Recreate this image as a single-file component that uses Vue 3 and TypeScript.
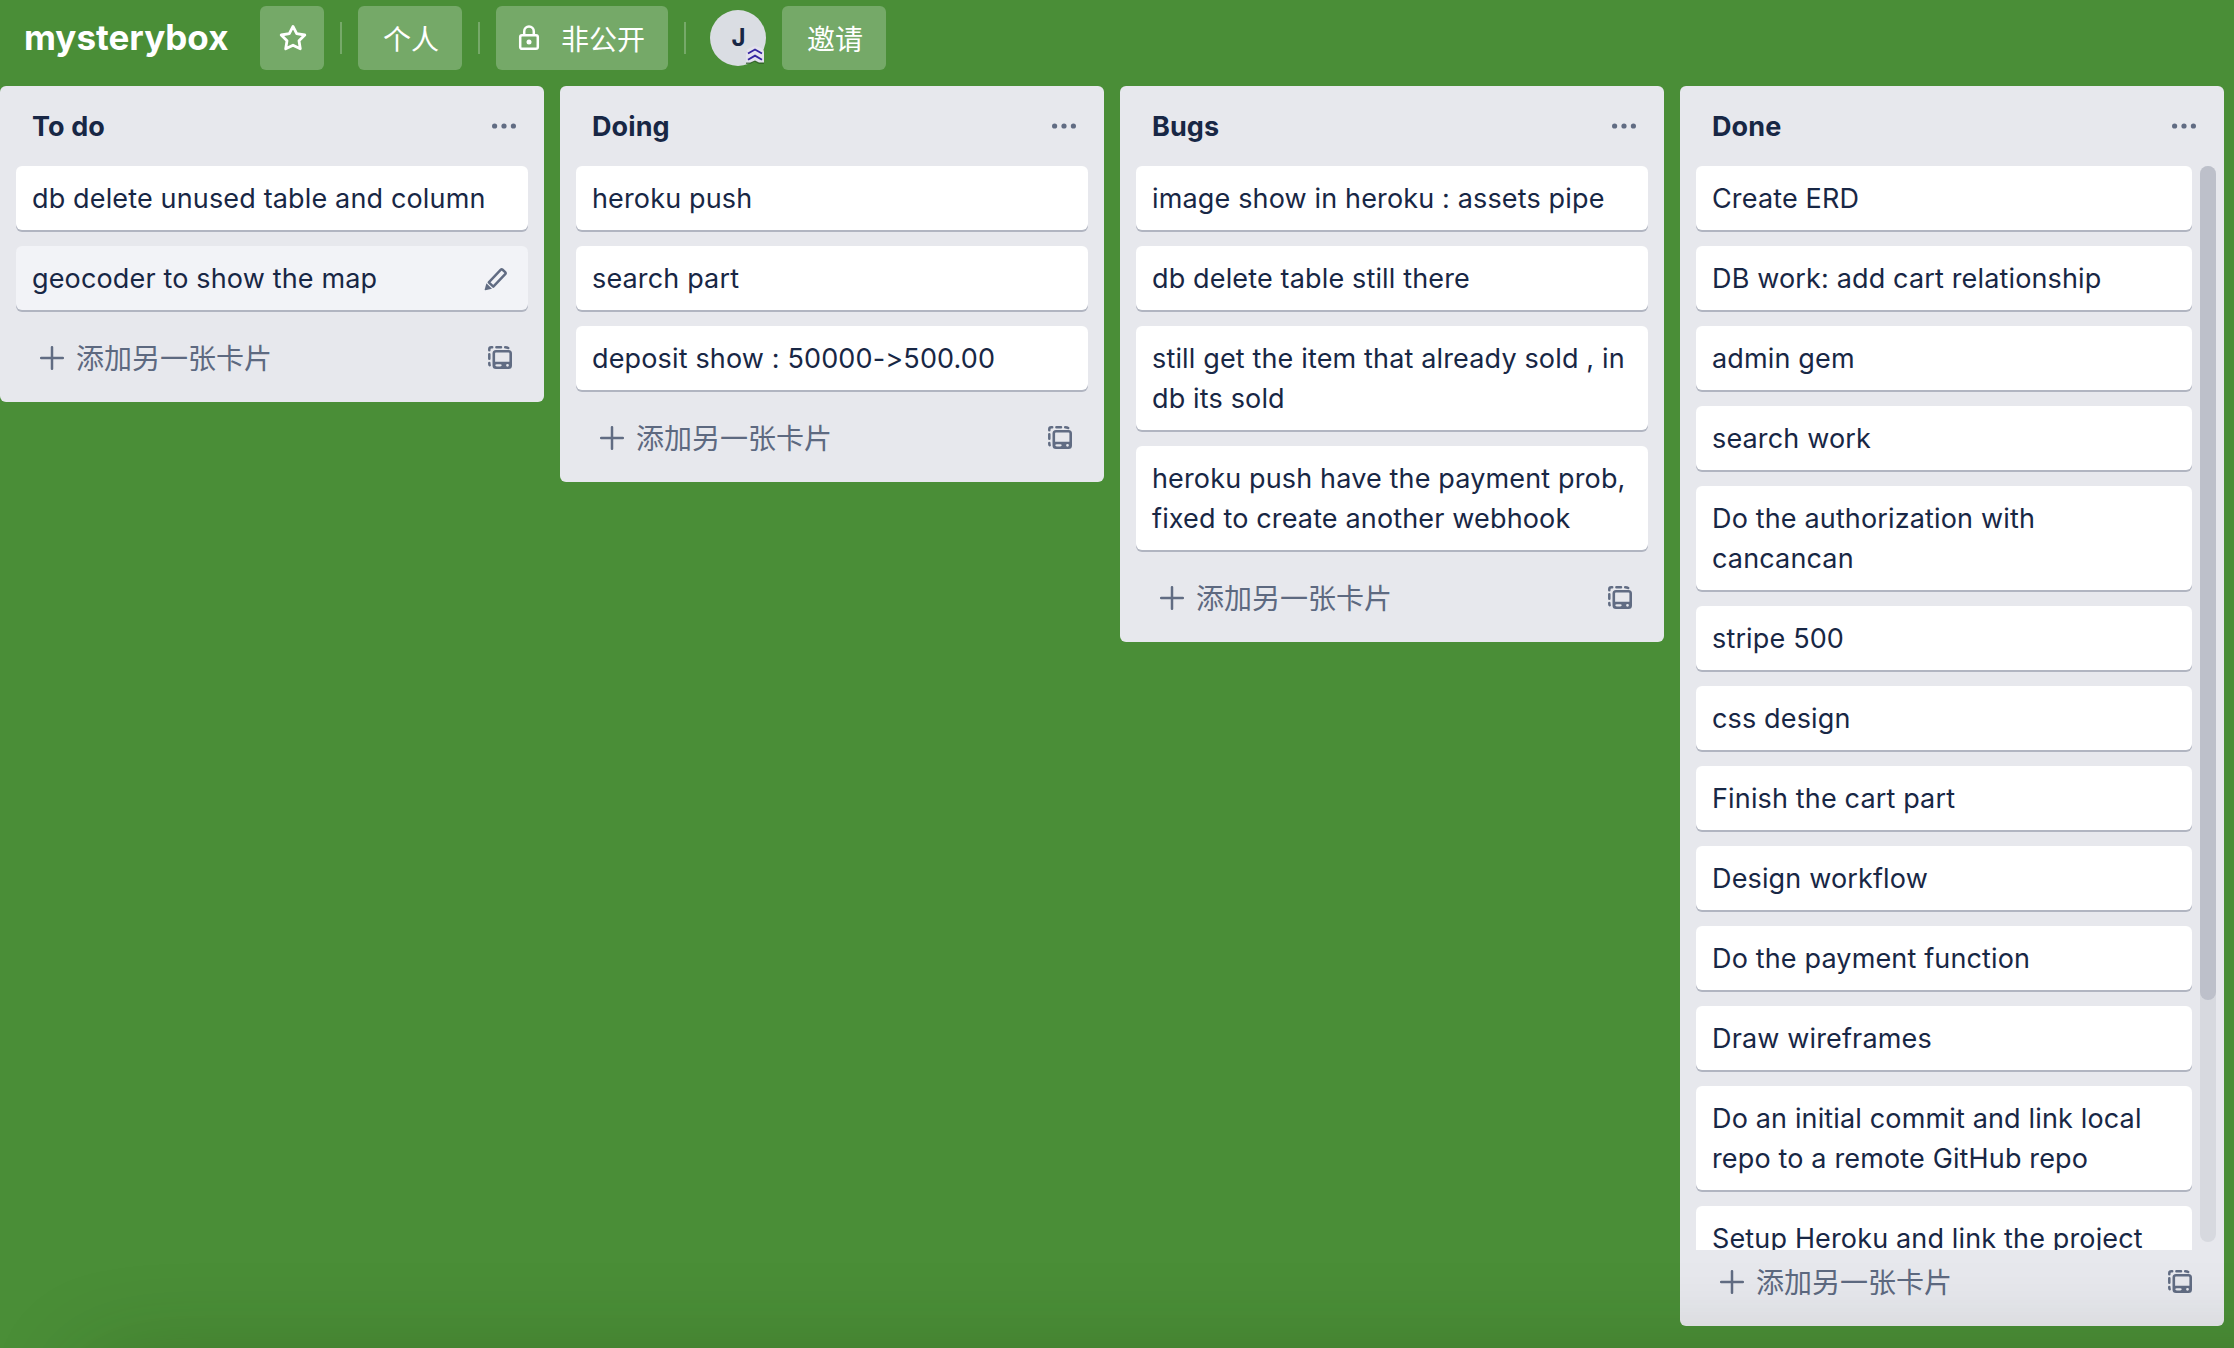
<script setup lang="ts">
interface Card {
  lines: string[]
  hover?: boolean
}
interface List {
  title: string
  cards: Card[]
  scroll?: boolean
}

const c = (...lines: string[]): Card => ({ lines })

const lists: List[] = [
  {
    title: 'To do',
    cards: [
      c('db delete unused table and column'),
      { lines: ['geocoder to show the map'], hover: true },
    ],
  },
  {
    title: 'Doing',
    cards: [c('heroku push'), c('search part'), c('deposit show : 50000->500.00')],
  },
  {
    title: 'Bugs',
    cards: [
      c('image show in heroku : assets pipe'),
      c('db delete table still there'),
      c('still get the item that already sold , in', 'db its sold'),
      c('heroku push have the payment prob,', 'fixed to create another webhook'),
    ],
  },
  {
    title: 'Done',
    scroll: true,
    cards: [
      c('Create ERD'),
      c('DB work: add cart relationship'),
      c('admin gem'),
      c('search work'),
      c('Do the authorization with', 'cancancan'),
      c('stripe 500'),
      c('css design'),
      c('Finish the cart part'),
      c('Design workflow'),
      c('Do the payment function'),
      c('Draw wireframes'),
      c('Do an initial commit and link local', 'repo to a remote GitHub repo'),
      c('Setup Heroku and link the project'),
    ],
  },
]
</script>

<template>
  <div class="page">
    <header class="bar">
      <h1 class="name">mysterybox</h1>
      <button class="btn star" aria-label="star">
        <svg width="32" height="32" viewBox="0 0 32 32" fill="none" stroke="#fff" stroke-width="2.8" stroke-linejoin="round">
          <path d="M17 4.400L20.700 11.700L28.800 13L23 18.800L24.300 26.800L17 23.200L9.700 26.800L11 18.800L5.200 13L13.300 11.700Z" />
        </svg>
      </button>
      <i class="sep" />
      <button class="btn">个人</button>
      <i class="sep" />
      <button class="btn private">
        <svg width="24" height="28" viewBox="0 0 24 28" fill="none" stroke="#fff" stroke-width="2.5">
          <rect x="3.2" y="11.2" width="17.6" height="13.6" rx="1.8" />
          <path d="M7.2 11V7.4a4.8 4.8 0 0 1 9.6 0V11" />
          <circle cx="12" cy="18" r="2.5" fill="#fff" stroke="none" />
        </svg>
        <span>非公开</span>
      </button>
      <i class="sep" />
      <div class="avatar">
        J
        <svg class="badge" width="20" height="20" viewBox="0 0 20 20">
          <path d="M1 8Q1 5 4 3.6L9 0.8L14 3.6Q19 5.500 19 8V18L14 18L9.500 15.800L5 18L1 18Z" fill="#2d5a24" opacity=".75" />
          <path d="M1 7Q1 4 4 2.600L9 0L14 1Q19 3 19 6V16.500L14 16.500L10 14.500L5 16.500L1 16.500Z" fill="#e4e2ee" />
          <g fill="none" stroke="#3425a0" stroke-width="1.900">
            <path d="M3 7.500L10 3.500L17 7.500" />
            <path d="M3 13.800L10 9.700L17 13.800" />
          </g>
        </svg>
      </div>
      <button class="btn">邀请</button>
    </header>

    <main class="board">
      <section v-for="list in lists" :key="list.title" class="list" :class="{ full: list.scroll }">
        <div class="head">
          <h2>{{ list.title }}</h2>
          <svg width="24" height="8" viewBox="0 0 24 8" fill="#616c83">
            <circle cx="2.600" cy="4" r="2.600" />
            <circle cx="12" cy="4" r="2.600" />
            <circle cx="21.400" cy="4" r="2.600" />
          </svg>
        </div>
        <div class="body">
          <div class="cards">
            <article v-for="card in list.cards" :key="card.lines[0]" class="card" :class="{ hover: card.hover }">
              <div>
                <p v-for="line in card.lines" :key="line">{{ line }}</p>
              </div>
              <svg v-if="card.hover" class="pencil" width="24" height="24" viewBox="0 0 24 24">
                <g fill="none" stroke="#616c83" stroke-width="2.500" stroke-linejoin="round">
                  <path d="M4.800 15.300L16.600 2.900Q17.600 1.900 18.600 2.800L21.200 5.200Q22.200 6.200 21.200 7.200L9.300 19.700Z" />
                </g>
                <path d="M2.400 16.200L8 21.700L1.300 23.300Q.5 23.400 .700 22.500Z" fill="#616c83" />
              </svg>
            </article>
          </div>
          <div v-if="list.scroll" class="track"><div class="thumb" /></div>
        </div>
        <footer class="add">
          <svg width="24" height="24" viewBox="0 0 24 24" stroke="#616c83" stroke-width="2.500" stroke-linecap="round">
            <path d="M1.200 12H22.800M12 1.200V22.800" />
          </svg>
          <span>添加另一张卡片</span>
          <svg class="tpl" width="24" height="24" viewBox="0 0 24 24">
            <g fill="none" stroke="#616c83" stroke-width="2.500" stroke-linecap="round">
              <path d="M1.300 4.300V3.200Q1.300 1.300 3.200 1.300H4.200M8.400 1.300H13M17.200 1.300Q19.200 1.300 20.200 2M1.300 8.300V12.800M1.300 17V18Q1.300 19 1.700 19.200" />
            </g>
            <path fill-rule="evenodd" fill="#616c83" d="M8 4H20.500Q24 4 24 7.500V19.500Q24 23 20.500 23H8Q4.500 23 4.500 19.500V7.500Q4.500 4 8 4ZM7.900 6.600Q7.100 6.600 7.100 7.400V15.700H21.400V7.400Q21.400 6.600 20.600 6.600ZM8.800 18.200Q7.300 18.200 7.300 19.300T8.800 20.400H12.200Q13.700 20.400 13.700 19.300T12.200 18.200ZM19.500 17.900A1.400 1.400 0 1 0 19.500 20.700A1.400 1.400 0 1 0 19.500 17.900Z" />
          </svg>
        </footer>
      </section>
    </main>
    <div class="shade" />
  </div>
</template>

<style>
body {
  background: #4a8e37;
}
</style>

<style scoped>
.page {
  position: relative;
  display: flex;
  flex-direction: column;
  width: 2234px;
  height: 1348px;
  overflow: hidden;
  background: #4a8e37;
  color: #182745;
  font-family: Inter, "Noto Sans CJK SC", sans-serif;
  font-feature-settings: "calt" 0;
}
.bar {
  display: flex;
  align-items: center;
  gap: 16px;
  box-sizing: border-box;
  height: 86px;
  padding: 6px 0 16px 24px;
}
.name {
  width: 220px;
  margin: 0;
  padding-bottom: 2px;
  color: #fff;
  font-size: 35px;
  font-weight: 700;
  letter-spacing: 0;
  line-height: 62px;
}
.btn {
  display: flex;
  align-items: center;
  justify-content: center;
  height: 64px;
  padding: 0 23px 0 25px;
  border: 0;
  border-radius: 6px;
  background: #75a968;
  color: #fff;
  font: 400 28px/60px "Noto Sans CJK SC", sans-serif;
}
.star {
  width: 64px;
  padding: 0;
}
.private {
  gap: 20px;
  padding-left: 21px;
}
.sep {
  width: 2px;
  height: 32px;
  background: #76a969;
}
.avatar {
  position: relative;
  box-sizing: border-box;
  width: 56px;
  height: 56px;
  margin-left: 8px;
  padding-left: 1px;
  border-radius: 50%;
  background: #dadde3;
  font-size: 24px;
  font-weight: 700;
  line-height: 56px;
  text-align: center;
}
.badge {
  position: absolute;
  right: 1px;
  bottom: 0;
}
.board {
  display: flex;
  flex: 1;
  align-items: flex-start;
  gap: 16px;
  min-height: 0;
  padding-bottom: 22px;
}
.list {
  display: flex;
  flex: none;
  flex-direction: column;
  width: 544px;
  border-radius: 6px;
  background: #e7e8ed;
}
.full {
  height: 100%;
}
.head {
  display: flex;
  flex: none;
  align-items: center;
  justify-content: space-between;
  height: 80px;
  padding: 0 28px 0 32px;
}
.head h2 {
  margin: 0;
  padding-top: 2px;
  font-size: 27px;
  font-weight: 650;
  letter-spacing: 0.1px;
  line-height: 40px;
}
.body {
  display: flex;
  min-height: 0;
  padding: 0 16px;
}
.full .body {
  flex: 1;
  gap: 8px;
  padding-right: 8px;
}
.cards {
  display: flex;
  flex: 1;
  flex-direction: column;
  gap: 16px;
  min-width: 0;
  padding-bottom: 16px;
}
.full .cards {
  padding: 0;
  overflow: hidden;
}
.card {
  display: flex;
  flex: none;
  align-items: center;
  justify-content: space-between;
  padding: 13px 20px 11px 16px;
  border-radius: 6px;
  background: #fff;
  box-shadow: 0 2px 0 #b1b5c1;
}
.hover {
  background: #f2f3f7;
}
.card p {
  margin: 0;
  font-size: 27px;
  letter-spacing: 0.15px;
  line-height: 40px;
  white-space: pre;
}
.track {
  width: 16px;
  margin-bottom: 8px;
  border-radius: 8px;
  background: #d7d9df;
}
.thumb {
  height: 834px;
  border-radius: 8px;
  background: #bdc0ca;
}
.add {
  display: flex;
  flex: none;
  align-items: center;
  height: 64px;
  padding: 0 32px 12px 40px;
  color: #5d6980;
  font-size: 28px;
  line-height: 40px;
}
.add span {
  flex: 1;
  margin-left: 12px;
  padding-top: 2px;
}
/* soft shadow rising from below the bottom edge */
.shade {
  position: absolute;
  top: 1368px;
  left: 90px;
  width: 2300px;
  height: 100px;
  border-radius: 20px;
  box-shadow: 0 0 100px rgba(30, 40, 0, 0.28);
  pointer-events: none;
}
</style>
